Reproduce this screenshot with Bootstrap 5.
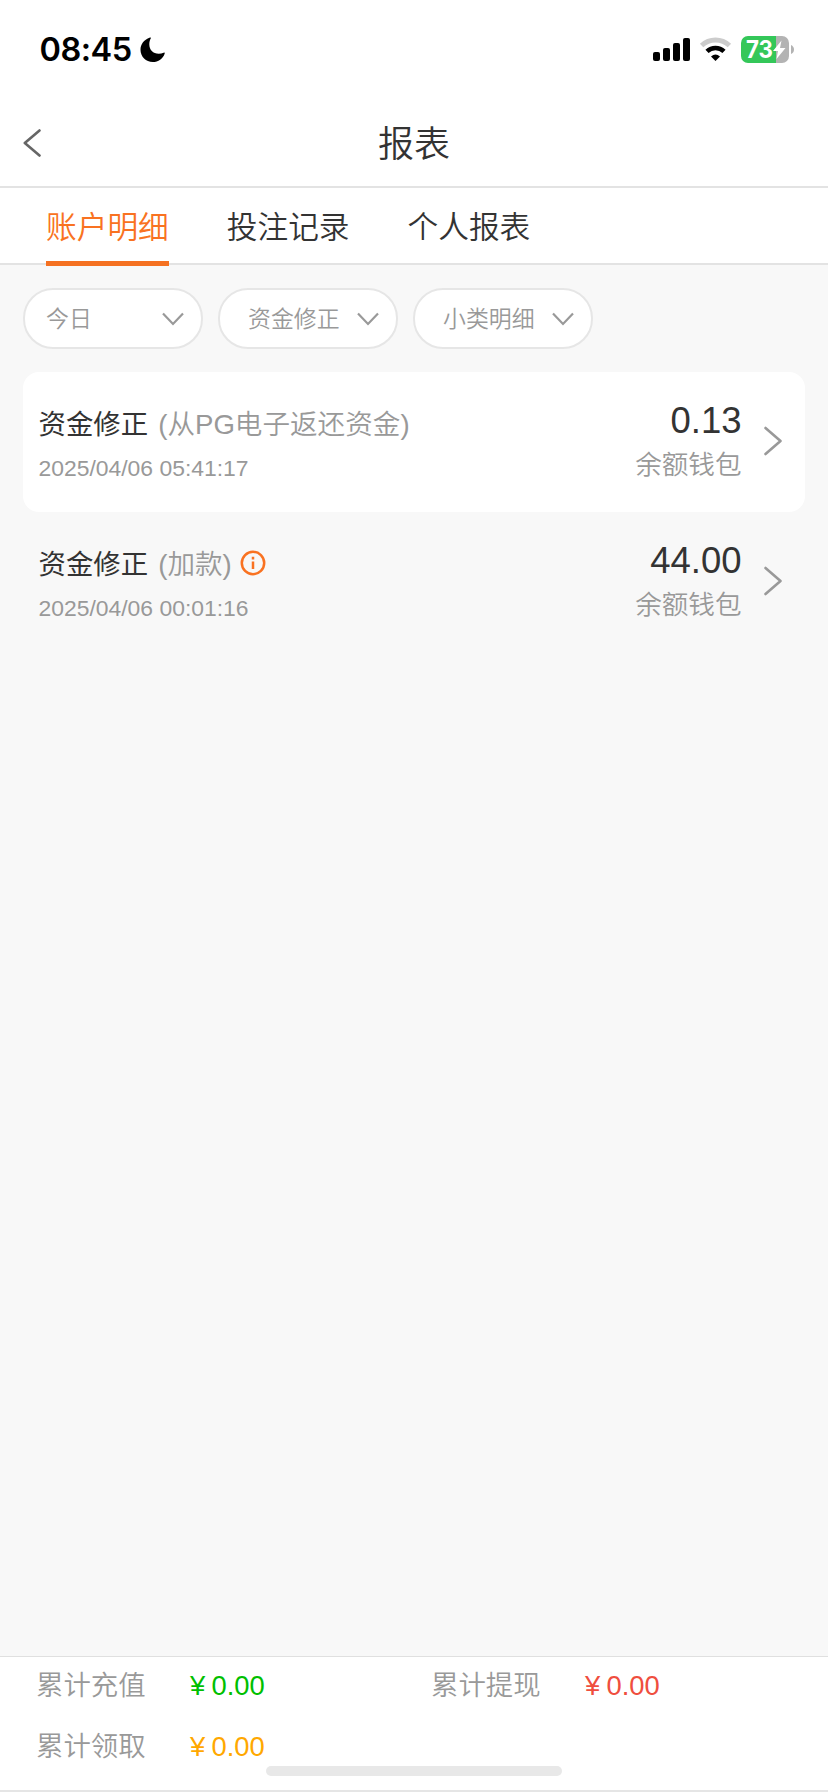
<!DOCTYPE html>
<html lang="zh-CN">
<head>
<meta charset="utf-8">
<meta name="viewport" content="width=device-width, initial-scale=1">
<title>报表</title>
<link href="https://cdn.jsdelivr.net/npm/bootstrap@5.3.0/dist/css/bootstrap.min.css" rel="stylesheet">
<style>
  body { font-family: "Liberation Sans", "Noto Sans CJK SC", sans-serif; background: #f8f8f8; color: #333; width: 828px; height: 1792px; overflow: hidden; }
  svg { display: block; flex: none; }
  .status { height: 100px; padding: 0 33px 0 39.5px; }
  .clock { font: 600 32.5px/40px Inter, sans-serif; color: #000; letter-spacing: -.5px; }
  .moon { margin-left: 8.5px; }
  .title-bar { height: 88px; border-bottom: 2px solid #e3e3e3; padding-left: 23px; }
  .title-bar h1 { font-size: 36px; line-height: 40px; font-weight: 350; left: 0; right: 0; top: 25px; }
  .tabs { height: 77px; border-bottom: 2px solid #e3e3e3; padding-left: 46px; gap: 58px; }
  .tabs .nav-link { font-size: 30.7px; line-height: 40px; font-weight: 350; color: #333; padding: 20px 0 13px; height: 78px; border-bottom: 5px solid transparent; border-radius: 0; }
  .tabs .nav-link.active { color: #f97221; border-color: #f57121; }
  .filters { padding: 23px 23px 0; gap: 15px; }
  .pill { width: 180px; height: 61px; border: 2px solid #e6e6e6; border-radius: 30px; font-size: 22.9px; line-height: 30px; font-weight: 350; color: #999; padding: 0 17px 0 21px; background: #fff; }
  .pill.inset { padding-left: 28px; }
  .records { padding: 23px 23px 0; }
  .record { height: 139.5px; border-radius: 16px; padding: 33px 22.500px 0 15.5px; }
  .kind { font-size: 27.4px; line-height: 40px; }
  .kind .soft { margin-left: 2.5px; font-size: 27.6px; }
  .info { margin: -3px 0 0 8px; }
  .soft { color: #999; font-weight: 350; }
  .when { font-size: 22.9px; line-height: 30px; color: #999; margin-top: 8px; }
  .amount { font-size: 36.5px; line-height: 40px; margin-top: -4px; }
  .wallet { font-size: 26.6px; line-height: 40px; margin-top: 4px; }
  .go { margin: 21px 0 0 22px; }
  .totals { height: 136px; border-top: 1px solid #e0e0e0; border-bottom: 2px solid #e5e5e5; padding: 9px 0 0 36px; font-size: 27.4px; line-height: 40px; }
  .totals .cell { width: 395px; height: 60.5px; }
  .totals .name { width: 154px; }
  .yen { width: 21.5px; }
  .in { color: #00bf00; }
  .out { color: #ef4e3e; }
  .claim { color: #ffa800; }
  .home { width: 296px; height: 10px; border-radius: 5px; background: #e8e8e8; left: 266px; bottom: 14px; }
</style>
</head>
<body class="d-flex flex-column">
<header class="bg-white">
  <div class="status d-flex align-items-center justify-content-between">
    <div class="d-flex align-items-center">
      <span class="clock">08:45</span>
      <svg class="moon" width="26" height="26" viewBox="0 0 26 26"><path d="M10 0.500C3.500 3 .5 7.500 .5 12.700c0 6.800 5.500 12.300 12.300 12.300 5.500 0 10.200-3.300 11.900-8.600.2-.6-.4-1-1-.7-1.600.7-3.200 1-4.900 1C13 16.700 9.300 12.800 9.300 7.200c0-2 .5-4 1.400-5.700.4-.7 0-1.200-.7-1z"/></svg>
    </div>
    <div class="d-flex align-items-center">
      <svg width="142" height="30" viewBox="0 0 142 30">
        <rect x="0" y="17" width="7" height="9" rx="2"/><rect x="10" y="13" width="7" height="13" rx="2"/><rect x="20" y="8" width="7" height="18" rx="2"/><rect x="30" y="3" width="7" height="23" rx="2"/>
        <path d="M48.600 10.500a20.500 20.500 0 0 1 27.800 0" fill="none" stroke="#ccc" stroke-width="5"/>
        <path d="M54 16.400a12.500 12.500 0 0 1 17 0" fill="none" stroke="#000" stroke-width="4.600"/>
        <path d="M58 21.500q4.500-4 9 0L62.500 26z"/>
        <path d="M95 1h21v27H95a7 7 0 0 1-7-7V8a7 7 0 0 1 7-7z" fill="#34c759"/>
        <path d="M123 1h6a7 7 0 0 1 7 7v13a7 7 0 0 1-7 7h-6z" fill="#b3b3b3"/><rect x="116" y="1" width="7" height="27" fill="#34c759"/>
        <path d="M138 10q3 1.500 3 4.500t-3 4.500z" fill="#b3b3b3"/>
        <text x="93" y="23" font-family="Inter, sans-serif" font-weight="700" font-size="24" fill="#fff" textLength="27" lengthAdjust="spacingAndGlyphs">73</text>
        <path d="M128.500 5.500L120 16h5l-1.500 8L132.500 13h-5.500z" fill="#fff"/>
      </svg>
    </div>
  </div>
  <div class="title-bar position-relative d-flex align-items-center">
    <svg width="19" height="28" viewBox="0 0 19 28" fill="none" stroke="#666" stroke-width="2.600" stroke-linecap="round" stroke-linejoin="round"><path d="M16.500 1.500L1.800 14l14.700 12.500"/></svg>
    <h1 class="position-absolute text-center m-0">报表</h1>
  </div>
  <nav class="tabs nav flex-nowrap">
    <a class="nav-link active" href="#">账户明细</a>
    <a class="nav-link" href="#">投注记录</a>
    <a class="nav-link" href="#">个人报表</a>
  </nav>
</header>
<main class="flex-grow-1">
  <div class="filters d-flex">
    <div class="pill d-flex align-items-center justify-content-between"><span>今日</span><svg width="22" height="14" viewBox="0 0 22 14" fill="none" stroke="#999" stroke-width="2.200"><path d="M1 1.500l10 10.500L21 1.500"/></svg></div>
    <div class="pill inset d-flex align-items-center justify-content-between"><span>资金修正</span><svg width="22" height="14" viewBox="0 0 22 14" fill="none" stroke="#999" stroke-width="2.200"><path d="M1 1.500l10 10.500L21 1.500"/></svg></div>
    <div class="pill inset d-flex align-items-center justify-content-between"><span>小类明细</span><svg width="22" height="14" viewBox="0 0 22 14" fill="none" stroke="#999" stroke-width="2.200"><path d="M1 1.500l10 10.500L21 1.500"/></svg></div>
  </div>
  <div class="records">
    <div class="record bg-white d-flex">
      <div class="flex-grow-1">
        <div class="kind">资金修正 <span class="soft">(从PG电子返还资金)</span></div>
        <div class="when">2025/04/06 05:41:17</div>
      </div>
      <div class="text-end">
        <div class="amount">0.13</div>
        <div class="wallet soft">余额钱包</div>
      </div>
      <svg class="go" width="19" height="30" viewBox="0 0 19 30" fill="none" stroke="#999" stroke-width="2.600" stroke-linecap="round" stroke-linejoin="round"><path d="M1.500 2l15 13-15 13"/></svg>
    </div>
    <div class="record d-flex">
      <div class="flex-grow-1">
        <div class="kind d-flex align-items-center"><span>资金修正 <span class="soft">(加款)</span></span><svg class="info" width="26" height="26" viewBox="0 0 26 26" fill="none" stroke="#f97221" stroke-width="2.500"><circle cx="13" cy="13" r="11.200"/><path d="M13 11.500v7.500M13 6.800v2.600"/></svg></div>
        <div class="when">2025/04/06 00:01:16</div>
      </div>
      <div class="text-end">
        <div class="amount">44.00</div>
        <div class="wallet soft">余额钱包</div>
      </div>
      <svg class="go" width="19" height="30" viewBox="0 0 19 30" fill="none" stroke="#999" stroke-width="2.600" stroke-linecap="round" stroke-linejoin="round"><path d="M1.500 2l15 13-15 13"/></svg>
    </div>
  </div>
</main>
<footer class="totals bg-white position-relative d-flex flex-wrap align-content-start">
  <div class="cell d-flex"><span class="name soft">累计充值</span><span class="yen in">¥</span><span class="in">0.00</span></div>
  <div class="cell d-flex"><span class="name soft">累计提现</span><span class="yen out">¥</span><span class="out">0.00</span></div>
  <div class="cell d-flex"><span class="name soft">累计领取</span><span class="yen claim">¥</span><span class="claim">0.00</span></div>
  <div class="home position-absolute"></div>
</footer>
<script src="https://cdn.jsdelivr.net/npm/bootstrap@5.3.0/dist/js/bootstrap.bundle.min.js"></script>
</body>
</html>
